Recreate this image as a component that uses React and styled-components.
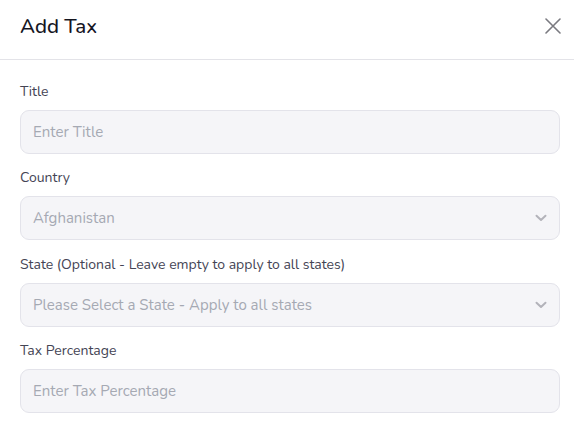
import React from "react";
import styled, { createGlobalStyle } from "styled-components";

const Global = createGlobalStyle`
  html, body { margin: 0; padding: 0; background: #fff; }
  body { font-family: "Nunito", "Lato", "Noto Sans", sans-serif; }
  * { box-sizing: border-box; }
`;

const Modal = styled.div`
  width: 574px;
  height: 442px;
  background: #fff;
  display: flex;
  flex-direction: column;
`;

const Header = styled.header`
  height: 60px;
  border-bottom: 1px solid #e3e3e8;
  display: flex;
  align-items: center;
  justify-content: space-between;
  padding: 0 9px 0 20px;
`;

const Heading = styled.h2`
  margin: 0;
  font-size: 20.5px;
  font-weight: 500;
  color: #15151f;
  padding-bottom: 8px;
`;

const Close = styled.button`
  border: 0;
  background: none;
  padding: 0;
  width: 24px;
  height: 24px;
  display: flex;
  align-items: center;
  justify-content: center;
  margin-bottom: 8px;
  color: #7a7a80;
`;

const Body = styled.div`
  padding: 22px 14px 0 20px;
  display: flex;
  flex-direction: column;
  gap: 14.3px;
`;

const Field = styled.div`
  display: flex;
  flex-direction: column;
  gap: 8px;
`;

const Label = styled.label`
  font-size: 14px;
  line-height: 20px;
  color: #444454;
`;

const Control = styled.div`
  position: relative;
  height: 44px;
  border: 1px solid #e3e3ea;
  border-radius: 9px;
  background: #f5f5f8;
  display: flex;
  align-items: center;
  padding: 0 12px;
  font-size: 15px;
  color: #a5a9b3;
`;

const Chevron = styled.span`
  margin-left: auto;
  display: flex;
  color: #b3b3ba;
`;

const ChevronIcon = () => (
  <svg width="12" height="8" viewBox="0 0 12 8" fill="none">
    <path d="M1.5 1.8 L6 6 L10.5 1.8" stroke="currentColor" strokeWidth="2" strokeLinecap="round" strokeLinejoin="round" />
  </svg>
);

const fields = [
  { label: "Title", value: "Enter Title" },
  { label: "Country", value: "Afghanistan", select: true },
  { label: "State (Optional - Leave empty to apply to all states)", value: "Please Select a State - Apply to all states", select: true },
  { label: "Tax Percentage", value: "Enter Tax Percentage" },
];

export default function App() {
  return (
    <Modal>
      <Global />
      <Header>
        <Heading>Add Tax</Heading>
        <Close aria-label="Close">
          <svg width="16" height="16" viewBox="0 0 16 16" fill="none">
            <path d="M1 1 L15 15 M15 1 L1 15" stroke="currentColor" strokeWidth="1.6" strokeLinecap="round" />
          </svg>
        </Close>
      </Header>
      <Body>
        {fields.map((f) => (
          <Field key={f.label}>
            <Label>{f.label}</Label>
            <Control>
              {f.value}
              {f.select && (
                <Chevron>
                  <ChevronIcon />
                </Chevron>
              )}
            </Control>
          </Field>
        ))}
      </Body>
    </Modal>
  );
}
